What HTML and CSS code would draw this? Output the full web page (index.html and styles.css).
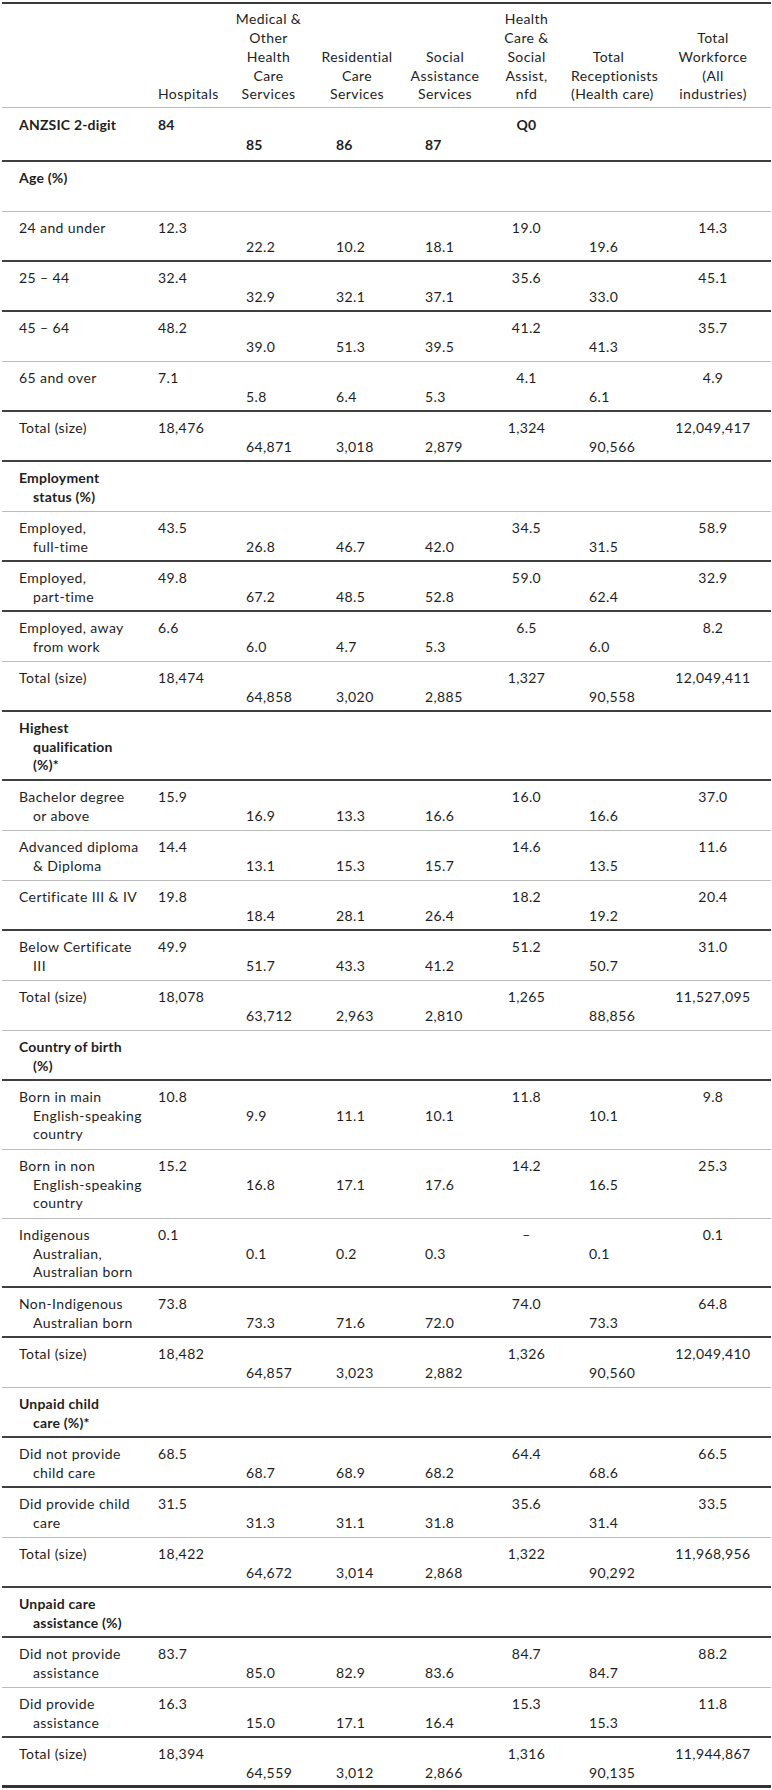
FILE: index.html
```html
<!DOCTYPE html>
<html lang="en">
<head>
<meta charset="utf-8">
<title>Workforce characteristics by industry</title>
<link rel="stylesheet" href="styles.css">
</head>
<body>
<table class="data">
  <colgroup>
    <col class="c-label"><col class="c-hosp"><col class="c-med"><col class="c-res"><col class="c-soc"><col class="c-nfd"><col class="c-rec"><col class="c-tot">
  </colgroup>
  <thead>
    <tr class="hd l">
      <th></th>
      <th>Hospitals</th>
      <th>Medical &amp;<br>Other<br>Health<br>Care<br>Services</th>
      <th>Residential<br>Care<br>Services</th>
      <th>Social<br>Assistance<br>Services</th>
      <th>Health<br>Care &amp;<br>Social<br>Assist,<br>nfd</th>
      <th>Total<br>Receptionists<br>(Health care)</th>
      <th>Total<br>Workforce<br>(All<br>industries)</th>
    </tr>
  </thead>
  <tbody>
    <tr class="code d"><td class="b">ANZSIC 2-digit</td><td class="b">84</td><td class="b lo">85</td><td class="b lo">86</td><td class="b lo">87</td><td class="b">Q0</td><td></td><td></td></tr>

    <tr class="l"><td class="b">Age (%)</td><td></td><td></td><td></td><td></td><td></td><td></td><td></td></tr>
    <tr class="d"><td>24 and under</td><td>12.3</td><td class="lo">22.2</td><td class="lo">10.2</td><td class="lo">18.1</td><td>19.0</td><td class="lo">19.6</td><td>14.3</td></tr>
    <tr class="d"><td>25 – 44</td><td>32.4</td><td class="lo">32.9</td><td class="lo">32.1</td><td class="lo">37.1</td><td>35.6</td><td class="lo">33.0</td><td>45.1</td></tr>
    <tr class="l"><td>45 – 64</td><td>48.2</td><td class="lo">39.0</td><td class="lo">51.3</td><td class="lo">39.5</td><td>41.2</td><td class="lo">41.3</td><td>35.7</td></tr>
    <tr class="d"><td>65 and over</td><td>7.1</td><td class="lo">5.8</td><td class="lo">6.4</td><td class="lo">5.3</td><td>4.1</td><td class="lo">6.1</td><td>4.9</td></tr>
    <tr class="d"><td>Total (size)</td><td>18,476</td><td class="lo">64,871</td><td class="lo">3,018</td><td class="lo">2,879</td><td>1,324</td><td class="lo">90,566</td><td>12,049,417</td></tr>

    <tr class="l"><td class="b">Employment<br>status (%)</td><td></td><td></td><td></td><td></td><td></td><td></td><td></td></tr>
    <tr class="d"><td>Employed,<br>full-time</td><td>43.5</td><td class="lo">26.8</td><td class="lo">46.7</td><td class="lo">42.0</td><td>34.5</td><td class="lo">31.5</td><td>58.9</td></tr>
    <tr class="d"><td>Employed,<br>part-time</td><td>49.8</td><td class="lo">67.2</td><td class="lo">48.5</td><td class="lo">52.8</td><td>59.0</td><td class="lo">62.4</td><td>32.9</td></tr>
    <tr class="l"><td>Employed, away<br>from work</td><td>6.6</td><td class="lo">6.0</td><td class="lo">4.7</td><td class="lo">5.3</td><td>6.5</td><td class="lo">6.0</td><td>8.2</td></tr>
    <tr class="d"><td>Total (size)</td><td>18,474</td><td class="lo">64,858</td><td class="lo">3,020</td><td class="lo">2,885</td><td>1,327</td><td class="lo">90,558</td><td>12,049,411</td></tr>

    <tr class="d tall"><td class="b">Highest<br>qualification<br>(%)*</td><td></td><td></td><td></td><td></td><td></td><td></td><td></td></tr>
    <tr class="l"><td>Bachelor degree<br>or above</td><td>15.9</td><td class="lo">16.9</td><td class="lo">13.3</td><td class="lo">16.6</td><td>16.0</td><td class="lo">16.6</td><td>37.0</td></tr>
    <tr class="l"><td>Advanced diploma<br>&amp; Diploma</td><td>14.4</td><td class="lo">13.1</td><td class="lo">15.3</td><td class="lo">15.7</td><td>14.6</td><td class="lo">13.5</td><td>11.6</td></tr>
    <tr class="d"><td>Certificate III &amp; IV</td><td>19.8</td><td class="lo">18.4</td><td class="lo">28.1</td><td class="lo">26.4</td><td>18.2</td><td class="lo">19.2</td><td>20.4</td></tr>
    <tr class="l"><td>Below Certificate<br>III</td><td>49.9</td><td class="lo">51.7</td><td class="lo">43.3</td><td class="lo">41.2</td><td>51.2</td><td class="lo">50.7</td><td>31.0</td></tr>
    <tr class="l"><td>Total (size)</td><td>18,078</td><td class="lo">63,712</td><td class="lo">2,963</td><td class="lo">2,810</td><td>1,265</td><td class="lo">88,856</td><td>11,527,095</td></tr>

    <tr class="d"><td class="b">Country of birth<br>(%)</td><td></td><td></td><td></td><td></td><td></td><td></td><td></td></tr>
    <tr class="l tall"><td>Born in main<br>English-speaking<br>country</td><td>10.8</td><td class="lo">9.9</td><td class="lo">11.1</td><td class="lo">10.1</td><td>11.8</td><td class="lo">10.1</td><td>9.8</td></tr>
    <tr class="l tall"><td>Born in non<br>English-speaking<br>country</td><td>15.2</td><td class="lo">16.8</td><td class="lo">17.1</td><td class="lo">17.6</td><td>14.2</td><td class="lo">16.5</td><td>25.3</td></tr>
    <tr class="d tall"><td>Indigenous<br>Australian,<br>Australian born</td><td>0.1</td><td class="lo">0.1</td><td class="lo">0.2</td><td class="lo">0.3</td><td>–</td><td class="lo">0.1</td><td>0.1</td></tr>
    <tr class="d"><td>Non-Indigenous<br>Australian born</td><td>73.8</td><td class="lo">73.3</td><td class="lo">71.6</td><td class="lo">72.0</td><td>74.0</td><td class="lo">73.3</td><td>64.8</td></tr>
    <tr class="l"><td>Total (size)</td><td>18,482</td><td class="lo">64,857</td><td class="lo">3,023</td><td class="lo">2,882</td><td>1,326</td><td class="lo">90,560</td><td>12,049,410</td></tr>

    <tr class="d"><td class="b">Unpaid child<br>care (%)*</td><td></td><td></td><td></td><td></td><td></td><td></td><td></td></tr>
    <tr class="d"><td>Did not provide<br>child care</td><td>68.5</td><td class="lo">68.7</td><td class="lo">68.9</td><td class="lo">68.2</td><td>64.4</td><td class="lo">68.6</td><td>66.5</td></tr>
    <tr class="l"><td>Did provide child<br>care</td><td>31.5</td><td class="lo">31.3</td><td class="lo">31.1</td><td class="lo">31.8</td><td>35.6</td><td class="lo">31.4</td><td>33.5</td></tr>
    <tr class="d"><td>Total (size)</td><td>18,422</td><td class="lo">64,672</td><td class="lo">3,014</td><td class="lo">2,868</td><td>1,322</td><td class="lo">90,292</td><td>11,968,956</td></tr>

    <tr class="d"><td class="b">Unpaid care<br>assistance (%)</td><td></td><td></td><td></td><td></td><td></td><td></td><td></td></tr>
    <tr class="l"><td>Did not provide<br>assistance</td><td>83.7</td><td class="lo">85.0</td><td class="lo">82.9</td><td class="lo">83.6</td><td>84.7</td><td class="lo">84.7</td><td>88.2</td></tr>
    <tr class="d"><td>Did provide<br>assistance</td><td>16.3</td><td class="lo">15.0</td><td class="lo">17.1</td><td class="lo">16.4</td><td>15.3</td><td class="lo">15.3</td><td>11.8</td></tr>
    <tr class="d last"><td>Total (size)</td><td>18,394</td><td class="lo">64,559</td><td class="lo">3,012</td><td class="lo">2,866</td><td>1,316</td><td class="lo">90,135</td><td>11,944,867</td></tr>
  </tbody>
</table>
</body>
</html>
```

FILE: styles.css
```css
html, body {
  margin: 0;
  padding: 0;
  background: #ffffff;
}

body {
  font-family: Lato, "Open Sans", "Liberation Sans", sans-serif;
  font-size: 14px;
  color: #1e1e1e;
}

.data {
  margin: 2px 0 0 2px;
  width: 769px;
  table-layout: fixed;
  border-collapse: separate;
  border-spacing: 0;
  border-top: 2px solid #3a3a3a;
}

.c-label { width: 154px; }
.c-hosp  { width: 73px; }
.c-med   { width: 90px; }
.c-res   { width: 89px; }
.c-soc   { width: 88px; }
.c-nfd   { width: 75px; }
.c-rec   { width: 99px; }
.c-tot   { width: 101px; }

.data th,
.data td {
  padding: 7px 0 0 0;
  vertical-align: top;
  line-height: 18.7px;
  font-weight: normal;
  text-align: left;
  white-space: nowrap;
  letter-spacing: 0.4px;
}

/* rows */
.data tr { height: 50px; }
.data tr.tall { height: 69px; }
.data tr.code { height: 54px; }
.data tr.hd { height: 104px; }

.data tr.l > * { border-bottom: 1px solid #bcbcbc; }
.data tr.d > * { border-bottom: 2px solid #3f3f3f; }
.data tr.last > * { border-bottom: 3px solid #333333; }

/* header */
.data th {
  vertical-align: bottom;
  padding: 0 0 3px 0;
  text-align: center;
}
.data th:nth-child(2) { text-align: left; padding-left: 2px; }
.data th:nth-child(3) { padding-right: 11px; }
.data th:nth-child(4) { padding-right: 13px; }
.data th:nth-child(5) { padding-right: 14px; }
.data th:nth-child(6) { padding-right: 14px; }
.data th:nth-child(7) { padding-right: 24px; }
.data th:nth-child(8) { padding-right: 15px; }

/* body columns */
.data td:nth-child(1) { padding-left: 31px; text-indent: -14px; }
.data td:nth-child(2) { padding-left: 2px; }
.data td:nth-child(3) { padding-left: 17px; }
.data td:nth-child(4) { padding-left: 17px; }
.data td:nth-child(5) { padding-left: 17px; }
.data td:nth-child(6) { text-align: center; padding-right: 14px; }
.data td:nth-child(7) { padding-left: 18px; }
.data td:nth-child(8) { text-align: center; padding-right: 15px; }

.data td.lo { padding-top: 25.7px; }
.data td.b { font-weight: 700; letter-spacing: 0.2px; }

.data tr.code td { padding-top: 8px; }
.data tr.code td.lo { padding-top: 27.5px; }
```
